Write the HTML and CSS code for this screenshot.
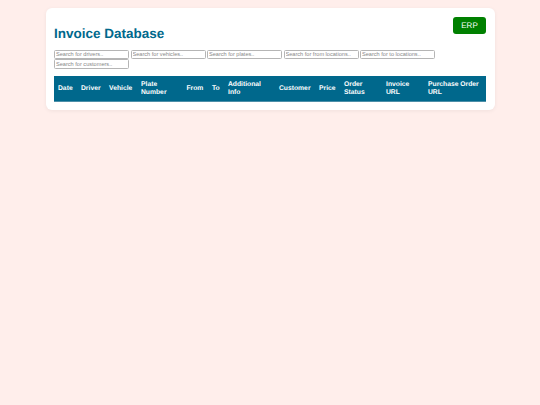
FILE: index.html
```html
<!DOCTYPE html>
<html lang="en">
<head>
<meta charset="utf-8">
<title>Invoice Database</title>
<link rel="stylesheet" href="styles.css">
</head>
<body>
<main class="card">
  <div class="top">
    <a class="erp" href="#">ERP</a>
  </div>
  <h1>Invoice Database</h1>
  <div class="filters">
    <input type="text" placeholder="Search for drivers..">
    <input type="text" placeholder="Search for vehicles..">
    <input type="text" placeholder="Search for plates..">
    <input type="text" placeholder="Search for from locations..">
    <input type="text" placeholder="Search for to locations..">
    <input type="text" placeholder="Search for customers..">
  </div>
  <table>
    <thead>
      <tr>
        <th class="c-date">Date</th><th class="c-driver">Driver</th><th class="c-vehicle">Vehicle</th><th class="c-plate">Plate Number</th><th class="c-from">From</th><th class="c-to">To</th><th class="c-info">Additional Info</th><th class="c-customer">Customer</th><th class="c-price">Price</th><th class="c-status">Order Status</th><th class="c-inv">Invoice URL</th><th class="c-po">Purchase Order URL</th>
      </tr>
    </thead>
  </table>
</main>
</body>
</html>
```
FILE: styles.css
```css
html, body { margin: 0; padding: 0; }
body {
  background: #ffeeeb;
  font-family: "Liberation Sans", Arial, sans-serif;
  min-height: 405px;
  padding-top: 8px;
  box-sizing: border-box;
  text-rendering: geometricPrecision;
}
.card {
  width: 449px;
  margin: 0 0 0 45.5px;
  height: 102px;
  box-sizing: border-box;
  background: #fff;
  border-radius: 6px;
  padding: 8.5px 8.5px 8px 8.5px;
  box-shadow: 0 1px 4px rgba(0, 0, 0, 0.06);
}
.top { display: flex; justify-content: flex-end; height: 0; }
.erp {
  display: block;
  width: 33px;
  height: 17.5px;
  line-height: 17px;
  text-align: center;
  background: #008000;
  color: #fff;
  font-size: 8px;
  font-weight: normal;
  text-decoration: none;
  border-radius: 3px;
}
h1 {
  margin: 9px 0 0;
  font-size: 13.5px;
  line-height: 16px;
  font-weight: bold;
  color: #00688c;
}
.filters {
  display: flex;
  flex-wrap: wrap;
  gap: 0 1.5px;
  margin-top: 8px;
  width: 400px;
}
input {
  width: 75px;
  box-sizing: border-box;
  height: 9.5px;
  margin: 0;
  padding: 0 1px;
  border: 0.75px solid #b5b5b5;
  border-radius: 1.5px;
  font-family: "Liberation Sans", Arial, sans-serif;
  font-size: 5.6px;
  background: #fff;
  outline: none;
}
input::placeholder { color: #888; }
table {
  width: 432px;
  margin-top: 7.5px;
  border-collapse: collapse;
  table-layout: fixed;
  background: #00688c;
  border-bottom: 0.75px solid #4d8fa8;
}
th {
  box-sizing: border-box;
  padding: 4px;
  height: 25.5px;
  font-size: 6.75px;
  line-height: 8px;
  font-weight: bold;
  color: #fff;
  text-align: left;
}
.c-date { width: 23px; }
.c-driver { width: 28px; }
.c-vehicle { width: 32px; }
.c-plate { width: 45.5px; }
.c-from { width: 25.5px; }
.c-to { width: 16px; }
.c-info { width: 51px; }
.c-customer { width: 40px; }
.c-price { width: 25px; }
.c-status { width: 42px; }
.c-inv { width: 42px; }
.c-po { width: 62px; }
```
